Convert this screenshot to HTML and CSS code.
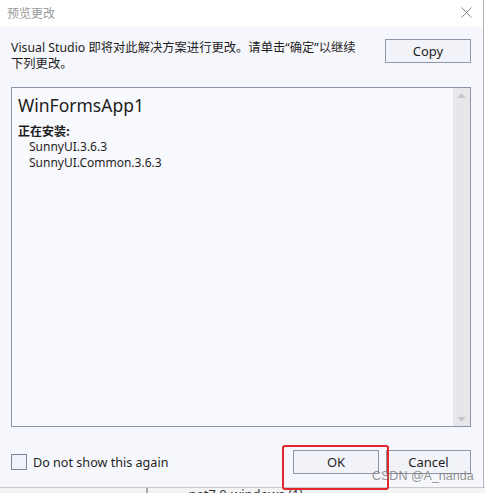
FILE: index.html
```html
<!DOCTYPE html>
<html>
<head>
<meta charset="utf-8">
<link rel="stylesheet" href="styles.css">
</head>
<body>
<div class="screen">
  <div class="dialog">
    <div class="titlebar">
      <span class="title">预览更改</span>
      <svg class="close" width="11" height="11" viewBox="0 0 11 11"><path d="M0.5 0.5 L10.5 10.5 M10.5 0.5 L0.5 10.5" stroke="#8a8a8a" stroke-width="1" fill="none"/></svg>
    </div>
    <div class="content">
      <div class="header">
        <p class="intro">Visual Studio 即将对此解决方案进行更改。请单击“确定”以继续<br>下列更改。</p>
        <button class="btn copy">Copy</button>
      </div>
      <div class="listbox">
        <div class="list-body">
          <div class="project">WinFormsApp1</div>
          <div class="section">正在安装:</div>
          <div class="pkg">SunnyUI.3.6.3</div>
          <div class="pkg">SunnyUI.Common.3.6.3</div>
        </div>
        <div class="scrollbar">
          <svg width="17" height="10" viewBox="0 0 17 10"><path d="M4 7 L8.5 2.5 L13 7 Z" fill="#c5c6cc"/></svg>
          <svg width="17" height="10" viewBox="0 0 17 10"><path d="M4 3 L8.5 7.5 L13 3 Z" fill="#c5c6cc"/></svg>
        </div>
      </div>
      <div class="footer">
        <label class="check"><span class="box"></span><span>Do not show this again</span></label>
        <div class="buttons">
          <button class="btn ok">OK</button>
          <button class="btn cancel">Cancel</button>
        </div>
      </div>
    </div>
  </div>
  <div class="behind"><span class="vline"></span><span class="bgtext">▴ net7.0-windows (1)</span></div>
  <div class="highlight"></div>
  <div class="watermark">CSDN @A_nanda</div>
</div>
</body>
</html>
```
FILE: styles.css
```css
* { box-sizing: border-box; }
html, body { margin: 0; padding: 0; }
body {
  width: 485px;
  height: 493px;
  overflow: hidden;
  background: #ffffff;
  font-family: "Noto Sans", "Noto Sans CJK SC", sans-serif;
  color: #1e1e1e;
}
.screen {
  position: relative;
  width: 485px;
  height: 493px;
  display: flex;
  flex-direction: column;
}
.dialog {
  width: 484px;
  height: 487px;
  border-right: 1px solid #b4b4b8;
  display: flex;
  flex-direction: column;
  background: #f6f7fc;
}
.titlebar {
  height: 27px;
  background: #ffffff;
  display: flex;
  align-items: center;
  justify-content: space-between;
  padding: 0 11px 2px 7px;
}
.title {
  font-family: "Noto Sans CJK SC", sans-serif;
  font-size: 12px;
  color: #9a9a9a;
}
.close { display: block; }
.content {
  flex: 1;
  display: flex;
  flex-direction: column;
  padding: 12px 12px 0 11px;
}
.header {
  height: 48px;
  display: flex;
  justify-content: space-between;
  align-items: flex-start;
}
.intro {
  margin: 1px 0 0 0;
  font-size: 12.3px;
  line-height: 16px;
  color: #1e1e1e;
}
.btn {
  font-family: "Noto Sans", "Noto Sans CJK SC", sans-serif;
  font-size: 13px;
  color: #1e1e1e;
  background: #f1f3f9;
  border: 1px solid #8e96a8;
  border-radius: 0;
  padding: 0;
  height: 24px;
}
.copy { width: 86px; }
.listbox {
  height: 340px;
  border: 1px solid #8c95a8;
  display: flex;
  background: #f8f9fd;
}
.list-body {
  flex: 1;
  padding: 5px 6px;
}
.project {
  font-size: 17.5px;
  line-height: 24px;
  color: #1e1e1e;
}
.section {
  margin-top: 6px;
  font-family: "Noto Sans CJK SC", sans-serif;
  font-weight: bold;
  font-size: 12px;
  line-height: 16px;
}
.pkg {
  padding-left: 11px;
  font-size: 12px;
  line-height: 16px;
}
.scrollbar {
  width: 17px;
  background: #e6e6eb;
  display: flex;
  flex-direction: column;
  justify-content: space-between;
  padding: 3px 0 2px;
}
.scrollbar svg { display: block; }
.footer {
  flex: 1;
  display: flex;
  align-items: center;
  justify-content: space-between;
  padding-top: 10px;
}
.check {
  display: flex;
  align-items: center;
  gap: 6px;
  font-size: 12.6px;
}
.box {
  width: 16px;
  height: 16px;
  border: 1px solid #7e8494;
  background: #eef2fa;
}
.buttons {
  display: flex;
  gap: 7px;
}
.ok { width: 86px; height: 24px; }
.cancel { width: 85px; height: 24px; }
.behind {
  flex: 1;
  position: relative;
  background: #f3f3f3;
  border-top: 1px solid #c8c8cc;
  overflow: hidden;
}
.vline {
  position: absolute;
  left: 146px;
  top: 0;
  width: 2px;
  height: 10px;
  background: #a8a8b0;
}
.bgtext {
  position: absolute;
  left: 178px;
  top: -3px;
  font-size: 13px;
  color: #333;
  white-space: nowrap;
}
.highlight {
  position: absolute;
  left: 282px;
  top: 445px;
  width: 107px;
  height: 45px;
  border: 2px solid #e3262a;
  border-radius: 3px;
}
.watermark {
  position: absolute;
  left: 372px;
  top: 469px;
  font-family: "Liberation Sans", sans-serif;
  font-size: 12.5px;
  white-space: nowrap;
  color: rgba(120,120,120,0.8);
}
```
